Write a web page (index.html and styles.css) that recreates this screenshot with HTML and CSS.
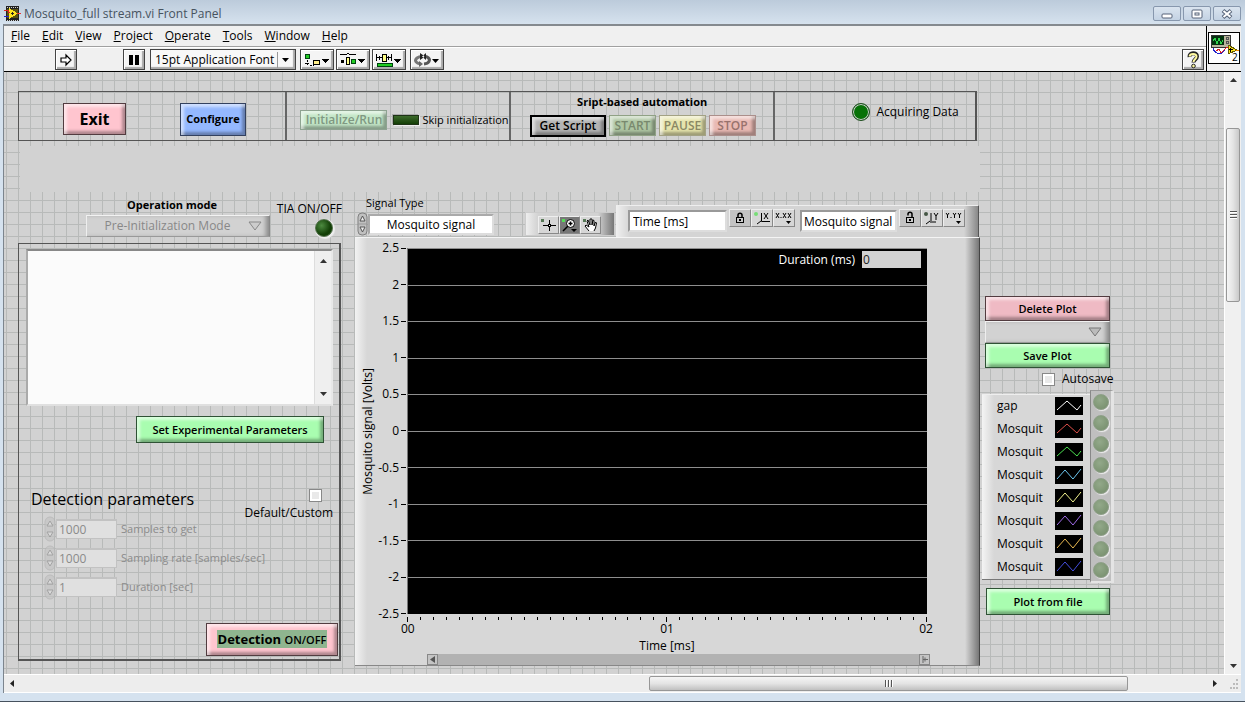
FILE: index.html
```html
<!DOCTYPE html>
<html lang="en">
<head>
<meta charset="utf-8">
<title>Mosquito_full stream.vi Front Panel</title>
<link rel="stylesheet" href="styles.css">
</head>
<body>
<div class="window">
  <header class="titlebar">
    <svg class="app-icon" width="17" height="15" viewBox="0 0 17 15" shape-rendering="crispEdges">
      <rect x="2" y="0" width="13" height="15" fill="#222"/>
      <path d="M3 1h11M3 14h11" stroke="#cfcfcf" stroke-dasharray="1 1"/>
      <rect x="3" y="3" width="11" height="9" fill="#5a5312"/>
      <path d="M5 2v11l9-5.500z" fill="#ffe51e"/>
      <path d="M0 4h4v2h2" stroke="#d22" fill="none"/><path d="M0 10h5" stroke="#22c"/><path d="M13 7h4" stroke="#e33"/>
      <path d="M7 7h3M8.500 5.500v3" stroke="#222"/>
    </svg>
    <span class="title">Mosquito_full stream.vi Front Panel</span>
    <div class="window-buttons">
      <button aria-label="Minimize"><svg width="12" height="10" viewBox="0 0 12 10"><rect x="1" y="5" width="10" height="4" rx="1" fill="#fff" stroke="#566378"/></svg></button>
      <button aria-label="Maximize"><svg width="12" height="10" viewBox="0 0 12 10"><rect x="1" y="1" width="10" height="8" rx="1" fill="#fff" stroke="#566378"/><rect x="4" y="4" width="4" height="2" fill="#fff" stroke="#566378"/></svg></button>
      <button aria-label="Close"><svg width="12" height="10" viewBox="0 0 12 10"><path d="M2 1.500l8 7M10 1.500l-8 7" stroke="#566378" stroke-width="4"/><path d="M2.500 2l7 6M9.500 2l-7 6" stroke="#fff" stroke-width="2"/></svg></button>
    </div>
  </header>

  <div class="frame">
    <div class="chrome">
      <div class="bars">
        <nav class="menubar">
          <button><u>F</u>ile</button><button><u>E</u>dit</button><button><u>V</u>iew</button><button><u>P</u>roject</button><button><u>O</u>perate</button><button><u>T</u>ools</button><button><u>W</u>indow</button><button><u>H</u>elp</button>
        </nav>
        <div class="toolbar">
          <button class="tool run" aria-label="Run"><svg width="14" height="14" viewBox="0 0 14 14"><path d="M2 5h5V2l5 5-5 5V9H2z" fill="#fff" stroke="#000" stroke-width="1.200"/></svg></button>
          <button class="tool pause" aria-label="Pause"><svg width="12" height="12" viewBox="0 0 12 12"><path d="M1 1h4v10H1zM7 1h4v10H7z"/></svg></button>
          <div class="font-box">
            <select aria-label="Font"><option>15pt Application Font</option></select>
            <svg width="7" height="4" viewBox="0 0 7 4"><path d="M0 0h7L3.500 4z"/></svg>
          </div>
          <button class="tool wide" aria-label="Align objects"><svg width="26" height="14" viewBox="0 0 26 14" shape-rendering="crispEdges"><rect x="1" y="1" width="4" height="4" fill="#2c2" stroke="#041"/><path d="M3 7v5M1 10h4M6 12h4" stroke="#000" stroke-dasharray="2 1"/><rect x="9" y="7" width="6" height="4" fill="#fe8" stroke="#000"/><path d="M18 6h7l-3.500 4z"/></svg></button>
          <button class="tool wide" aria-label="Distribute objects"><svg width="26" height="14" viewBox="0 0 26 14" shape-rendering="crispEdges"><path d="M0 2l2-1h5l1-1 1 1h5l2 1" fill="none" stroke="#000"/><path d="M1 7h3v3H1z"/><rect x="6" y="4" width="3" height="7" fill="#ff8" stroke="#000"/><rect x="11" y="6" width="4" height="4" fill="#2c2" stroke="#041"/><path d="M18 6h7l-3.500 4z"/></svg></button>
          <button class="tool wide" aria-label="Resize objects"><svg width="26" height="14" viewBox="0 0 26 14" shape-rendering="crispEdges"><path d="M0.500 1v7M15.500 1v7M1 4.500h5M10 4.500h5M3.500 3v4M12.500 3v4" stroke="#000"/><rect x="6" y="1" width="4" height="7" fill="#ff8" stroke="#000"/><rect x="1" y="10" width="15" height="3" fill="#2c2" stroke="#041"/><path d="M18 6h7l-3.500 4z"/></svg></button>
          <button class="tool wide reorder" aria-label="Reorder"><svg width="26" height="14" viewBox="0 0 26 14"><path d="M7 11C2 10.500 0 7.500 3 5c2-1.500 4-1.500 5-1.500" fill="none" stroke="#777" stroke-width="3"/><path d="M10 11c5-.5 7-4 4-6.500-1-1-3-1-4-1" fill="none" stroke="#555" stroke-width="3"/><path d="M6 0l5 3.500L6 7zM12 0L8 3.500 12 7z" fill="#222"/><path d="M5 8l4 3-4 3z" fill="#666"/><path d="M18 6h7l-3.500 4z"/></svg></button>
          <button class="tool help" aria-label="Context help"><svg width="14" height="18" viewBox="0 0 14 18"><path d="M3.500 6C3 1 11 1 11 5.500 11 8 7.500 8.500 7.500 11.500" fill="none" stroke="#222" stroke-width="4"/><path d="M3.500 5.500C4 2 10.500 2 10.500 5.500 10.500 8 7.500 8.500 7.500 11" fill="none" stroke="#fff9a0" stroke-width="2"/><circle cx="7.500" cy="15" r="1.800" fill="#fff9a0" stroke="#222"/></svg></button>
        </div>
      </div>
      <div class="vi-icon">
        <svg width="32" height="32" viewBox="0 0 32 32" shape-rendering="crispEdges">
          <rect x="0.500" y="0.500" width="31" height="31" fill="#fff" stroke="#000"/>
          <rect x="3" y="3" width="19" height="12" fill="#b9b49c" stroke="#333"/>
          <rect x="4" y="4" width="12" height="9" fill="#03330e"/>
          <path d="M5 9l2-3 2 6 2-6 2 6 2-4" fill="none" stroke="#2fd44c"/>
          <path d="M18 5h2v2h-2zM18 9h2v2h-2z" fill="none" stroke="#555"/>
          <path d="M5 16v2l4 3h5l3-3" fill="none" stroke="#22c"/><path d="M8 19l3-2 2 4 5-5 3-1" fill="none" stroke="#d22"/>
          <path d="M20 13v9l9-4z" fill="#ffe51e" stroke="#665a00"/><path d="M21 17.500h4M22.500 16v4" stroke="#000"/><path d="M28 18h3" stroke="#e80"/>
          <text x="24" y="29" class="vi-number">2</text>
        </svg>
      </div>
    </div>

    <div class="workspace">
      <main class="canvas">
        <section class="command-strip">
          <div class="cell cell-main">
            <button class="bevel pink exit">Exit</button>
            <button class="bevel blue configure">Configure</button>
          </div>
          <div class="cell cell-init">
            <button class="bevel init" disabled>Initialize/Run</button>
            <span class="bar-led"></span>
            <span class="skip">Skip initialization</span>
          </div>
          <div class="cell cell-script">
            <h2>Sript-based automation</h2>
            <div class="script-buttons">
              <button class="bevel get">Get Script</button>
              <button class="bevel start" disabled>START</button>
              <button class="bevel pause-script" disabled>PAUSE</button>
              <button class="bevel stop" disabled>STOP</button>
            </div>
          </div>
          <div class="cell cell-status"><span class="round-led"></span><span>Acquiring Data</span></div>
        </section>
        <div class="blank-band"></div>

        <div class="panels">
          <section class="left-column">
            <div class="mode-row">
              <div class="mode">
                <label for="mode">Operation mode</label>
                <div class="ring">
                  <select id="mode" disabled><option>Pre-Initialization Mode</option></select>
                  <svg width="14" height="10" viewBox="0 0 14 10"><path d="M1 1h12L7 9z" fill="#ccc" stroke="#888"/></svg>
                </div>
              </div>
              <div class="tia"><span>TIA ON/OFF</span><span class="ball-led"></span></div>
            </div>
            <div class="box">
              <div class="listing">
                <textarea aria-label="Experimental parameters"></textarea>
                <div class="list-scroll">
                  <svg width="7" height="4" viewBox="0 0 7 4"><path d="M0 4h7L3.500 0z" fill="#333"/></svg>
                  <svg width="7" height="4" viewBox="0 0 7 4"><path d="M0 0h7L3.500 4z" fill="#333"/></svg>
                </div>
              </div>
              <button class="bevel green set-params">Set Experimental Parameters</button>
              <div class="detect-head">
                <h1>Detection parameters</h1>
                <label class="custom"><input type="checkbox" class="check">Default/Custom</label>
              </div>
              <div class="fields">
                <label class="field"><svg class="spin" width="12" height="26" viewBox="0 0 12 26"><rect x="1" y="1" width="10" height="24" rx="5" fill="#c4c4c4" stroke="#b4b4b4"/><path d="M3 10l3-5 3 5zM3 16l3 5 3-5z" fill="#ddd" stroke="#909090"/></svg><input type="text" value="1000" disabled><span>Samples to get</span></label>
                <label class="field"><svg class="spin" width="12" height="26" viewBox="0 0 12 26"><rect x="1" y="1" width="10" height="24" rx="5" fill="#c4c4c4" stroke="#b4b4b4"/><path d="M3 10l3-5 3 5zM3 16l3 5 3-5z" fill="#ddd" stroke="#909090"/></svg><input type="text" value="1000" disabled><span>Sampling rate [samples/sec]</span></label>
                <label class="field"><svg class="spin" width="12" height="26" viewBox="0 0 12 26"><rect x="1" y="1" width="10" height="24" rx="5" fill="#c4c4c4" stroke="#b4b4b4"/><path d="M3 10l3-5 3 5zM3 16l3 5 3-5z" fill="#ddd" stroke="#909090"/></svg><input type="text" value="1" disabled><span>Duration [sec]</span></label>
              </div>
              <button class="bevel pink detection"><span class="mark">Detection <small>ON/OFF</small></span></button>
            </div>
          </section>

          <section class="graph-column">
            <div class="graph-head">
              <div class="signal">
                <label for="signal">Signal Type</label>
                <div class="signal-ring">
                  <svg width="11" height="24" viewBox="0 0 11 24"><rect x="1" y="1" width="9" height="22" rx="4" fill="#c0c0c0" stroke="#808080"/><path d="M1 12h9" stroke="#999"/><path d="M3 9l2.500-5L8 9zM3 15l2.500 5L8 15z" fill="#eee" stroke="#555"/></svg>
                  <input id="signal" type="text" value="Mosquito signal">
                </div>
              </div>
              <div class="palette">
                <button class="mini" aria-label="Cursor"><svg width="17" height="14" viewBox="0 0 17 14" shape-rendering="crispEdges"><rect x="1" y="1" width="3" height="3" fill="#575"/><path d="M3 7.500h13M9.500 2v11" stroke="#000"/><path d="M8 6h3v3H8z"/><path d="M9 7h1v1H9z" fill="#fff"/></svg></button>
                <button class="mini active" aria-label="Zoom"><svg width="17" height="14" viewBox="0 0 17 14"><rect x="1" y="1" width="3" height="3" fill="#5d5"/><circle cx="9.500" cy="5.500" r="4" fill="#fff" stroke="#000"/><path d="M7.500 5.500h4M9.500 3.500v4M7 8l-5 5" stroke="#000" stroke-width="1.500"/><path d="M10 11h6l-3 3z"/></svg></button>
                <button class="mini" aria-label="Pan"><svg width="17" height="14" viewBox="0 0 17 14"><rect x="1" y="1" width="3" height="3" fill="#575"/><path d="M7 13L3 8l1-1 3 2-2-6 1-1 2 5V1h2v6l1-5 1 .5V8l1.500-4 1 1-1 5-1.500 3" fill="#fff" stroke="#000"/></svg></button>
              </div>
              <div class="scale-legend">
                <input class="scale-name" type="text" value="Time [ms]" aria-label="X scale name">
                <button class="mini lock" aria-label="Lock X"><svg width="12" height="14" viewBox="0 0 12 14"><rect x="2.500" y="6.500" width="7" height="5" fill="#ccc" stroke="#000"/><path d="M4 6V4c0-2.500 4-2.500 4 0v2" fill="none" stroke="#000" stroke-width="1.500"/><path d="M5 9h2" stroke="#000" stroke-width="2"/></svg></button>
                <button class="mini" aria-label="Autoscale X"><svg width="18" height="14" viewBox="0 0 18 14"><circle cx="3" cy="3" r="2" fill="#7d7"/><path d="M8.500 2v8.500H17M8 10l-4 3M11 2l4 6M15 2l-4 6" fill="none" stroke="#000"/></svg></button>
                <button class="mini" aria-label="X format"><svg width="18" height="14" viewBox="0 0 18 14"><path d="M1 2l3 5M4 2L1 7M8 2l3 5M11 2L8 7M13 2l3 5M16 2l-3 5M6 6v1" stroke="#000"/><path d="M11 10h5l-2.500 3z"/></svg></button>
                <input class="scale-name y-name" type="text" value="Mosquito signal" aria-label="Y scale name">
                <button class="mini lock" aria-label="Lock Y"><svg width="12" height="14" viewBox="0 0 12 14"><rect x="2.500" y="6.500" width="7" height="5" fill="#ccc" stroke="#000"/><path d="M4 4.500V3c0-2.500 4-2.500 4 0v3" fill="none" stroke="#000" stroke-width="1.500"/><path d="M5 9h2" stroke="#000" stroke-width="2"/></svg></button>
                <button class="mini" aria-label="Autoscale Y"><svg width="18" height="14" viewBox="0 0 18 14"><circle cx="3" cy="3" r="2" fill="#454"/><path d="M8 2v8M7 11h6M7 10l-4 3M11 2l2 3 2-3M13 5v4" fill="none" stroke="#000"/></svg></button>
                <button class="mini" aria-label="Y format"><svg width="18" height="14" viewBox="0 0 18 14"><path d="M1 2l1.500 2L4 2M2.500 4v3M8 2l1.500 2L11 2M9.500 4v3M13 2l1.500 2L16 2M14.500 4v3M6 6v1" fill="none" stroke="#000"/><path d="M11 10h5l-2.500 3z"/></svg></button>
              </div>
            </div>

            <div class="graph">
              <div class="y-title"><span>Mosquito signal [Volts]</span></div>
              <div class="y-scale">
                <span>2.5</span><span>2</span><span>1.5</span><span>1</span><span>0.5</span><span>0</span><span>-0.5</span><span>-1</span><span>-1.5</span><span>-2</span><span>-2.5</span>
              </div>
              <div class="plot">
                <div class="lines"><i></i><i></i><i></i><i></i><i></i><i></i><i></i><i></i><i></i><i></i><i></i></div>
                <label class="duration">Duration (ms)<input type="text" value="0"></label>
              </div>
              <div class="x-scale">
                <div class="ticks">
                  <i></i><i></i><i></i><i></i><i></i><i></i><i></i><i></i><i></i><i></i><i></i><i></i><i></i><i></i><i></i><i></i><i></i><i></i><i></i><i></i><i></i><i></i><i></i><i></i><i></i><i></i><i></i><i></i><i></i><i></i><i></i><i></i><i></i><i></i><i></i><i></i><i></i><i></i><i></i><i></i><i></i>
                </div>
                <div class="x-labels"><span>00</span><span>01</span><span>02</span></div>
                <div class="x-title">Time [ms]</div>
              </div>
              <div class="graph-scroll">
                <button aria-label="Scroll left"><svg width="6" height="7" viewBox="0 0 6 7"><path d="M5 0v7L0 3.500z" fill="#555"/></svg></button>
                <button aria-label="Scroll right"><svg width="6" height="7" viewBox="0 0 6 7"><path d="M1 0v7M1 3.500h5M3 1.500v4" stroke="#666"/></svg></button>
              </div>
            </div>
          </section>

          <section class="right-column">
            <button class="bevel rose side">Delete Plot</button>
            <div class="ring side-ring">
              <select aria-label="Plot"><option></option></select>
              <svg width="14" height="10" viewBox="0 0 14 10"><path d="M1 1h12L7 9z" fill="#bbb" stroke="#777"/></svg>
            </div>
            <button class="bevel green side">Save Plot</button>
            <label class="autosave"><input type="checkbox" class="check">Autosave</label>
            <div class="legend-row">
              <ul class="legend">
                <li>gap<svg viewBox="0 0 28 18"><path d="M2 13L12 4l10 9 4-5" stroke="#fff"/></svg></li>
                <li>Mosquit<svg viewBox="0 0 28 18"><path d="M2 13L12 4l10 9 4-5" stroke="#e0504a"/></svg></li>
                <li>Mosquit<svg viewBox="0 0 28 18"><path d="M2 13L12 4l10 9 4-5" stroke="#4be050"/></svg></li>
                <li>Mosquit<svg viewBox="0 0 28 18"><path d="M2 13L10 4l8 9 8-10" stroke="#6cc6f0"/></svg></li>
                <li>Mosquit<svg viewBox="0 0 28 18"><path d="M2 13L10 4l8 9 8-10" stroke="#f4f490"/></svg></li>
                <li>Mosquit<svg viewBox="0 0 28 18"><path d="M2 13L10 4l8 9 8-10" stroke="#a06ce8"/></svg></li>
                <li>Mosquit<svg viewBox="0 0 28 18"><path d="M2 13L10 4l8 9 8-10" stroke="#e8b850"/></svg></li>
                <li>Mosquit<svg viewBox="0 0 28 18"><path d="M2 13L10 4l8 9 8-10" stroke="#4650e0"/></svg></li>
              </ul>
              <div class="leds"><i></i><i></i><i></i><i></i><i></i><i></i><i></i><i></i><i></i></div>
            </div>
            <button class="bevel green side from-file">Plot from file</button>
          </section>
        </div>
      </main>

      <div class="v-scroll">
        <svg width="7" height="4" viewBox="0 0 7 4"><path d="M0 4h7L3.500 0z" fill="#333"/></svg>
        <div class="track"><span class="before"></span><span class="thumb"><i></i><i></i><i></i></span><span class="after"></span></div>
        <svg width="7" height="4" viewBox="0 0 7 4"><path d="M0 0h7L3.500 4z" fill="#333"/></svg>
      </div>
    </div>

    <div class="h-scroll">
      <svg width="4" height="7" viewBox="0 0 4 7"><path d="M4 0v7L0 3.500z" fill="#222"/></svg>
      <div class="track"><span class="before"></span><span class="thumb"><i></i><i></i><i></i></span><span class="after"></span></div>
      <svg width="4" height="7" viewBox="0 0 4 7"><path d="M0 0v7l4-3.500z" fill="#222"/></svg>
      <svg class="grip" width="10" height="10" viewBox="0 0 10 10"><path d="M7 0h2v2H7zM4 4h2v2H4zM7 4h2v2H7zM1 8h2v2H1zM4 8h2v2H4zM7 8h2v2H7z" fill="#bbb"/></svg>
    </div>
  </div>
</div>
</body>
</html>
```
FILE: styles.css
```css
* { box-sizing: border-box; }
body {
  margin: 0;
  font: 12px/16px "Open Sans", "Noto Sans", sans-serif;
  color: #000;
}
button, input, select, textarea { font: inherit; color: inherit; margin: 0; padding: 0; border: 0; border-radius: 0; }
select { appearance: none; }
svg { display: block; flex: none; }
h1, h2, ul { margin: 0; padding: 0; font-size: inherit; font-weight: normal; list-style: none; }

.window {
  display: flex;
  flex-direction: column;
  min-height: 100vh;
  padding: 0 4px 8px 3px;
  background: #d5e2ef;
  border-bottom: 1px solid #46525e;
}
.titlebar {
  display: flex;
  align-items: center;
  height: 24px;
  margin: 0 -4px 0 -3px;
  padding: 3px 4px 0;
  background: linear-gradient(#bccbdb, #d6e2ee);
}
.title { margin-left: 3px; color: #47535f; }
.window-buttons { display: flex; gap: 2px; margin-left: auto; }
.window-buttons button {
  display: grid;
  place-items: center;
  width: 28px;
  height: 15px;
  background: linear-gradient(#dae4ef, #c3d2e3);
  border: 1px solid #8797ad;
  border-radius: 2px;
}

.frame { display: flex; flex-direction: column; flex: 1; border-left: 1px solid #7c858e; border-top: 2px solid #858a8f; background: #f0f0f0; }
.chrome { display: flex; border-bottom: 1px solid #000; }
.bars { flex: 1; }
.menubar { display: flex; gap: 12px; height: 21px; padding: 0 7px 1px; border-bottom: 1px solid #a0a0a0; }
.menubar button { background: none; }
.toolbar { display: flex; align-items: flex-start; height: 24px; padding: 1px 2px 0 51px; border-top: 1px solid #fff; }
.tool {
  display: grid;
  place-items: center;
  width: 22px;
  height: 21px;
  background: #f4f4f4;
  border: 1px solid #444;
  box-shadow: inset 1px 1px #fff, inset -2px -2px 1px #aaa;
}
.wide { width: 34px; margin-left: 2px; place-items: center start; padding-left: 3px; }
.pause { margin-left: 46px; }
.reorder { margin-left: 4px; }
.help { margin-left: auto; }
.font-box {
  display: flex;
  align-items: center;
  width: 146px;
  height: 21px;
  margin: 0 2px 0 5px;
  padding-right: 6px;
  background: #f8f8f8;
  border: 1px solid #444;
  box-shadow: inset -2px -2px 1px #aaa;
}
.font-box select { flex: 1; min-width: 0; margin-right: 4px; padding-left: 4px; background: none; border-right: 1px solid #999; }
.vi-icon { padding: 6px 1px 0; border-left: 1px solid #000; }
.vi-number { font: 10px "Open Sans", sans-serif; }

.workspace { display: flex; flex: 1; }
.canvas {
  flex: 1;
  min-width: 0;
  padding: 19px 0 8px 14px;
  background:
    linear-gradient(90deg, #b8bab9 1px, transparent 1px) 2px 0 / 12px 12px,
    linear-gradient(#b8bab9 1px, transparent 1px) 0 8px / 12px 12px,
    #d2d2d2;
}

.bevel {
  border: 1px solid #333;
  font-weight: 600;
  white-space: nowrap;
  box-shadow: inset 3px 3px 3px #ffffff90, inset -3px -3px 3px #00000050;
}
.pink { background: #ffc5cf; border-color: #523c40; }
.rose { background: #efbac4; border-color: #523c40; }
.blue { background: #94b8ff; border-color: #33415f; }
.green { background: #a9fdb0; border-color: #2f5235; }

.command-strip { display: grid; grid-template-columns: 267fr 224fr 265fr 202fr; height: 50px; margin-right: 247px; border: 1px solid #555; border-right-width: 2px; }
.cell { display: flex; align-items: center; overflow: hidden; }
.cell + .cell { border-left: 2px solid #666; }
.cell-main { padding: 6px 0 0 44px; gap: 54px; }
.exit { width: 63px; height: 32px; font-size: 16px; font-weight: 700; }
.configure { width: 66px; height: 33px; font-size: 11px; font-weight: 700; }
.cell-init { padding: 8px 0 0 13px; gap: 6px; }
.init { width: 87px; height: 20px; color: #7f9882; background: #c3e6c7; border-color: #8ea391; flex: none; }
.bar-led { flex: none; width: 26px; height: 10px; background: linear-gradient(#3d6b2c, #143e06); border: 1px solid #1e3316; box-shadow: 1px 1px #eee, -1px -1px #aaa; }
.skip { margin-left: -3px; white-space: nowrap; font-size: 11px; }
.cell-script { flex-direction: column; padding-top: 2px; gap: 5px; align-items: stretch; }
.cell-script h2 { font-weight: 700; text-align: center; font-size: 11px; }
.script-buttons { display: flex; gap: 3px; padding-left: 19px; }
.script-buttons .bevel { width: 47px; height: 21px; }
.script-buttons .get { width: 76px; height: 22px; background: #b4b4b4; border: 2px solid #000; }
.script-buttons .start { background: #afc6a3; color: #78896e; border-color: #90a185; }
.script-buttons .pause-script { background: #e6e4ac; color: #8a8864; border-color: #a3a284; }
.script-buttons .stop { background: #e9b9b3; color: #98726d; border-color: #ab8f8b; }
.cell-status { padding: 0 0 8px 77px; gap: 6px; }
.round-led { width: 18px; height: 18px; border-radius: 50%; background: #077207; border: 1px solid #234f23; box-shadow: inset 0 0 0 1px #d2d2d2; }
.blank-band { height: 46px; margin: 5px 244px 0 2px; background: #d2d2d2; }

.panels { display: flex; align-items: flex-start; padding-right: 110px; }
.left-column { flex: none; width: 323px; padding-top: 5px; }
.mode-row { display: flex; height: 46px; margin-right: -1px; padding-left: 68px; }
.mode { width: 184px; text-align: center; }
.mode label { display: block; height: 18px; font-weight: 700; font-size: 11px; padding-right: 12px; }
.tia { display: flex; flex-direction: column; align-items: flex-end; gap: 2px; margin-left: auto; padding-top: 4px; white-space: nowrap; }
.ball-led { width: 18px; height: 18px; margin-right: 9px; border-radius: 50%; background: radial-gradient(circle at 35% 35%, #4d8a40, #123f06 60%); border: 1px solid #52704a; box-shadow: 1px 1px 1px 1px #eee; }
.ring { display: flex; align-items: center; height: 22px; padding-right: 7px; background: #d2d2d2; border: 1px solid #aaa; border-color: #f2f2f2 #888 #999 #eee; box-shadow: inset -5px 0 5px -2px #888; }
.ring select { flex: 1; min-width: 0; text-align: center; background: none; color: #888; opacity: 1; }
.box { display: flex; flex-direction: column; height: 418px; padding: 5px 1px 3px 7px; border: 1px solid #555; border-right-width: 2px; border-bottom-width: 2px; }
.listing { display: flex; height: 157px; margin-right: 5px; border: 2px solid #999; border-color: #888 #e8e8e8 #e0e0e0 #aaa; background: #fbfbfb; }
.listing textarea { flex: 1; resize: none; background: none; }
.list-scroll { display: flex; flex-direction: column; justify-content: space-between; align-items: center; width: 17px; padding: 8px 0; background: #efefef; border-left: 1px solid #ddd; }
.set-params { align-self: flex-end; width: 188px; height: 27px; margin: 10px 14px 0 0; font-size: 11px; }
.detect-head { display: flex; justify-content: space-between; margin-top: 46px; padding-left: 5px; }
.detect-head h1 { font-size: 16px; line-height: 20px; }
.custom { display: flex; flex-direction: column; align-items: flex-end; gap: 3px; padding-right: 5px; }
.custom .check { margin-right: 11px; }
.check { appearance: none; width: 13px; height: 13px; background: #e9e9e9; border: 1px solid #888; box-shadow: inset 0 0 0 2px #fff; }
.fields { display: flex; flex-direction: column; gap: 3px; margin-top: -5px; padding-left: 18px; color: #8b8b8b; font-size: 11px; }
.field { display: flex; align-items: center; height: 26px; }
.spin { opacity: 0.7; }
.field input { width: 61px; height: 20px; margin-right: 4px; padding-left: 2px; background: #e0e0e0; border: 1px solid #c2c2c2; border-top-width: 2px; font-size: 12px; }
.detection { align-self: flex-end; width: 132px; height: 33px; margin-top: auto; font-size: 13px; font-weight: 700; }
.mark { padding: 0 1px; background: #8fb58f; }
.mark small { font-size: 11px; font-weight: 600; }

.graph-column { flex: 1; min-width: 0; margin: 0 2px 0 14px; }
.graph-head { display: flex; align-items: flex-end; height: 45px; }
.signal { width: 139px; }
.signal label { display: block; margin-left: 11px; font-size: 11px; }
.signal-ring { display: flex; align-items: center; padding-left: 2px; height: 26px; }
.signal-ring input { flex: 1; min-width: 0; height: 21px; text-align: center; background: #fff; border: 2px solid #bbb; border-color: #aaa #ddd #ddd #aaa; }
.palette { display: flex; height: 24px; margin: 0 0 1px auto; padding: 3px 13px 3px 12px; background: linear-gradient(90deg, #eee, #d2d2d2 12px, #d2d2d2 72px, #777); border: 1px solid #ccc; }
.mini { display: grid; place-items: center; width: 21px; height: 18px; background: #d6d6d6; border: 1px solid #999; border-color: #eee #888 #888 #eee; }
.active { background: #777; }
.scale-legend { display: flex; align-items: flex-start; width: 363px; height: 32px; margin: 0 1px 0 1px; padding: 3px 0 0 12px; background: linear-gradient(90deg, #f0f0f0, #d4d4d4 14px, #d4d4d4 348px, #888); border-top: 1px solid #eee; border-right: 1px solid #555; }
.scale-name { width: 99px; height: 22px; margin: 1px 2px 0 0; padding-left: 3px; background: #fff; border: 2px solid #aaa; border-color: #999 #ddd #ddd #999; }
.y-name { margin-left: 5px; width: 97px; padding-left: 2px; }
.scale-legend .lock { background: #c2c2c2; }
.scale-legend .mini { width: 22px; }

.graph {
  display: grid;
  grid-template-columns: 21px 31px minmax(0, 1fr);
  grid-template-rows: 366px 40px 11px;
  padding: 10px 52px 0 0;
  background: linear-gradient(90deg, #f2f2f2, #d7d7d7 12px) 0 0 / 50% 100% no-repeat, linear-gradient(270deg, #777, #d7d7d7 14px) 100% 0 / 50% 100% no-repeat;
  border-top: 1px solid #f4f4f4;
  border-right: 1px solid #444;
  border-bottom: 1px solid #888;
}
.y-title { display: grid; place-items: center end; }
.y-title span { writing-mode: vertical-rl; transform: rotate(180deg); white-space: nowrap; }
.y-scale { display: flex; flex-direction: column; justify-content: space-between; margin: -8px 0; }
.y-scale span { display: flex; align-items: center; justify-content: flex-end; gap: 2px; }
.y-scale span::after { content: ""; width: 5px; height: 1px; margin-right: 1px; background: #000; }
.plot { position: relative; background: #000; border-left: 1px solid #777; }
.lines { display: flex; flex-direction: column; justify-content: space-between; height: 100%; }
.lines i { height: 1px; background: #8e8e8e; }
.lines i:last-child { background: none; }
.duration { position: absolute; top: 3px; right: 6px; display: flex; align-items: center; gap: 7px; color: #fff; }
.duration input { width: 59px; height: 17px; padding-left: 1px; background: #d2d2d2; color: #222; }
.x-scale { grid-column: 3; padding-top: 3px; }
.ticks { display: flex; justify-content: space-between; height: 5px; }
.ticks i { width: 1px; height: 3px; background: #000; }
.ticks i:nth-child(20n + 1) { height: 5px; }
.x-labels { display: flex; justify-content: space-between; margin: -1px -6px 0; }
.x-title { text-align: center; margin-top: 1px; }
.graph-scroll { grid-column: 3; display: flex; justify-content: space-between; margin: 0 -3px 0 20px; background: #b2b2b2; }
.graph-scroll button { display: grid; place-items: center; width: 11px; background: #c4c4c4; border: 1px solid #888; }

.right-column { flex: none; display: flex; flex-direction: column; width: 132px; padding: 104px 0 0 3px; }
.side { width: 125px; height: 25px; font-size: 11px; }
.side-ring { width: 125px; }
.autosave { display: flex; align-items: center; gap: 7px; height: 16px; margin: 3px 0 0 57px; }
.legend-row { display: flex; align-items: center; margin: 3px 0 5px -3px; }
.legend { width: 108px; padding: 0 7px 0 15px; background: linear-gradient(90deg, #f4f4f4, #d7d7d7 12px); border-top: 1px solid #eee; border-bottom: 1px solid #777; }
.legend li { display: flex; align-items: center; justify-content: space-between; height: 23px; }
.legend svg { width: 28px; height: 18px; background: #000; fill: none; }
.leds { display: flex; flex-direction: column; justify-content: space-between; align-items: center; width: 24px; height: 193px; padding: 3px 0; background: #bfbfbf; border: 1px solid #aaa; border-color: #999 #e4e4e4 #e4e4e4 #888; border-right-width: 3px; border-bottom-width: 2px; }
.leds i { width: 16px; height: 16px; border-radius: 50%; background: radial-gradient(circle at 40% 35%, #93a98a, #748c6a); border: 1px solid #8e9f88; box-shadow: 1px 1px 1px #eee; }
.from-file { height: 27px; margin-left: 1px; width: 124px; }

.v-scroll { display: flex; flex-direction: column; align-items: center; width: 17px; padding: 6px 0; background: #f0f0f0; border-left: 1px solid #fff; }
.h-scroll { display: flex; align-items: center; height: 19px; padding: 0 2px 0 6px; background: #ededed; border-top: 1px solid #fff; border-bottom: 1px solid #fff; }
.track { display: flex; flex: 1; }
.v-scroll .track { flex-direction: column; width: 100%; padding: 0 1px; }
.v-scroll .before { flex: 46; }
.v-scroll .after { flex: 363; }
.v-scroll .thumb { flex: 172; flex-direction: column; background: linear-gradient(90deg, #f5f5f5, #e4e4e4 50%, #c9c9c9); }
.h-scroll .before { flex: 635; }
.h-scroll .after { flex: 85; }
.h-scroll .thumb { flex: 477; height: 15px; background: linear-gradient(#f5f5f5, #e4e4e4 50%, #c0c0c0); }
.thumb { display: flex; align-items: center; justify-content: center; gap: 1px; border: 1px solid #979797; border-radius: 2px; }
.v-scroll .thumb i { width: 7px; height: 2px; background: linear-gradient(#555 50%, #fff 50%); }
.h-scroll .thumb i { width: 2px; height: 7px; background: linear-gradient(90deg, #555 50%, #fff 50%); }
.grip { margin-left: 12px; }
```
